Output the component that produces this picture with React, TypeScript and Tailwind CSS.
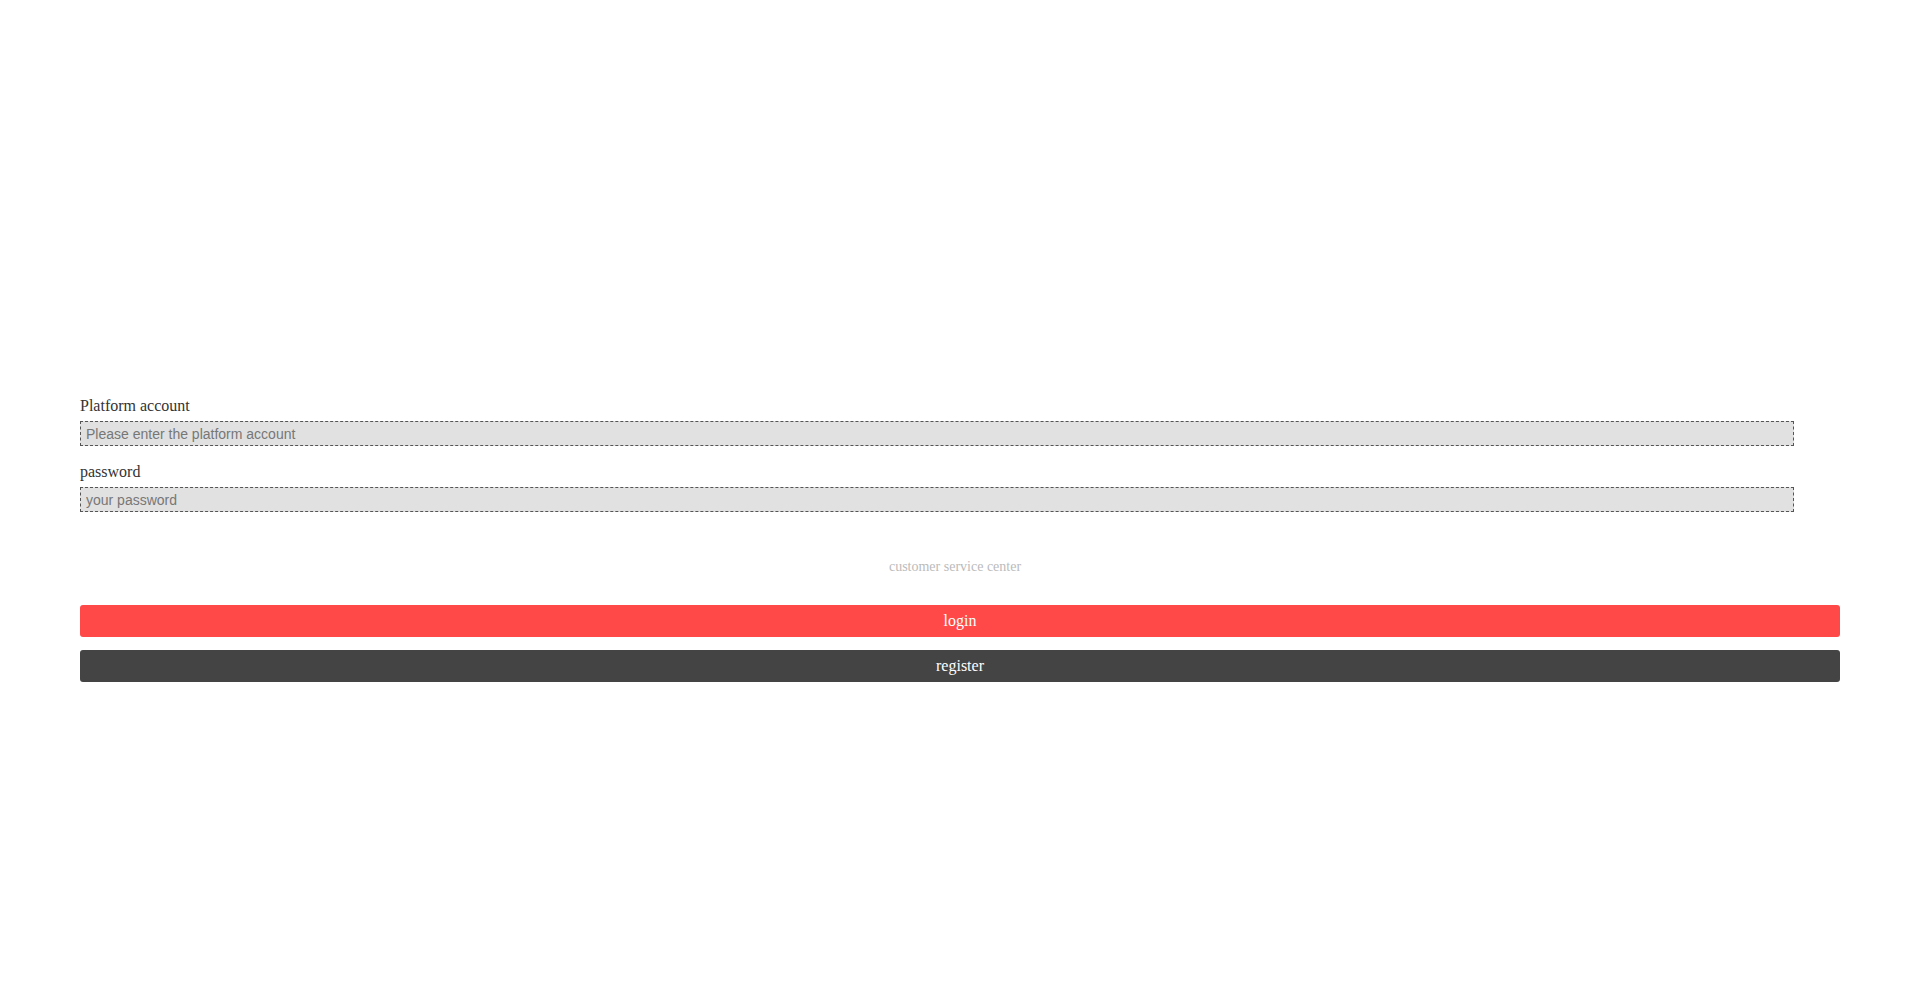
export default function App() {
  return (
    <div className="min-h-screen bg-white px-[80px] pt-[397px] font-['Liberation_Serif',serif]">
      <div className="w-full">
        {/* account */}
        <div>
          <label className="block text-[16px] leading-[18px] text-[#333] mb-[6px]">Platform account</label>
          <input
            type="text"
            placeholder="Please enter the platform account"
            className="block w-[1714px] h-[25px] border border-dashed border-[#555] bg-[#e1e1e1] px-[5px] text-[14px] font-['Liberation_Sans',sans-serif] text-[#333] placeholder:text-[#777] outline-none"
          />
        </div>

        {/* password */}
        <div className="mt-[17px]">
          <label className="block text-[16px] leading-[18px] text-[#333] mb-[6px]">password</label>
          <input
            type="password"
            placeholder="your password"
            className="block w-[1714px] h-[25px] border border-dashed border-[#555] bg-[#e1e1e1] px-[5px] text-[14px] font-['Liberation_Sans',sans-serif] text-[#333] placeholder:text-[#777] outline-none"
          />
        </div>

        <div className="mt-[47px] pr-[10px] text-center text-[14px] leading-[16px] text-[#bbb]">
          customer service center
        </div>

        <button className="mt-[30px] block w-full h-[32px] rounded-[3px] bg-[#ff4848] text-white text-[16px]">
          login
        </button>
        <button className="mt-[13px] block w-full h-[32px] rounded-[3px] bg-[#444] text-white text-[16px]">
          register
        </button>
      </div>
    </div>
  );
}
